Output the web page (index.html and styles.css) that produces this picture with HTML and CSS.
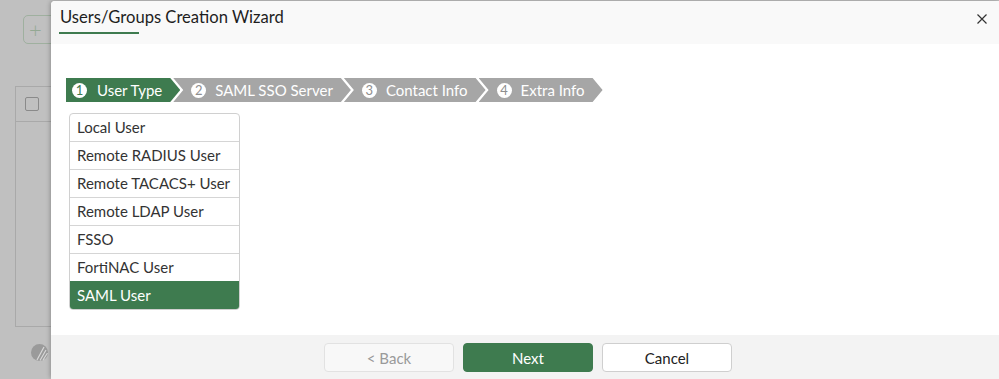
FILE: index.html
```html
<!DOCTYPE html>
<html lang="en">
<head>
    <meta charset="UTF-8">
    <title>Users/Groups Creation Wizard</title>
    <link rel="stylesheet" href="styles.css">
</head>
<body>
<!-- page behind the modal -->
<div class="page">
    <div class="toolbar">
        <button class="add-btn">+</button>
    </div>
    <div class="grid">
        <div class="grid-head"><span class="checkbox"></span></div>
    </div>
    <div class="page-logo">
        <svg width="17" height="17" viewBox="0 0 17 17">
            <circle cx="8.5" cy="8.5" r="8.5" fill="#9a9a9a"/>
            <path d="M6 16 L13 3 M9 16.5 L15 6 M12 16 L16.5 9" stroke="#d8d8d8" stroke-width="1.2"/>
        </svg>
    </div>
</div>

<div class="dialog">
    <div class="dialog-header">
        <h2 class="dialog-title">Users/Groups Creation Wizard</h2>
        <button class="close-btn">
            <svg width="10" height="10" viewBox="0 0 10 10">
                <path d="M0.5 0.5 L9.5 9.5 M9.5 0.5 L0.5 9.5" stroke="#333" stroke-width="1.2"/>
            </svg>
        </button>
    </div>

    <div class="dialog-body">
        <!-- Wizard steps -->
        <ol class="steps">
            <li class="step active"><span class="num">1</span>User Type</li>
            <li class="step"><span class="num">2</span>SAML SSO Server</li>
            <li class="step"><span class="num">3</span>Contact Info</li>
            <li class="step"><span class="num">4</span>Extra Info</li>
        </ol>

        <!-- User type selection -->
        <ul class="type-list">
            <li>Local User</li>
            <li>Remote RADIUS User</li>
            <li>Remote TACACS+ User</li>
            <li>Remote LDAP User</li>
            <li>FSSO</li>
            <li>FortiNAC User</li>
            <li class="selected">SAML User</li>
        </ul>
    </div>

    <div class="dialog-footer">
        <button class="btn" disabled>&lt; Back</button>
        <button class="btn primary">Next</button>
        <button class="btn">Cancel</button>
    </div>
</div>
</body>
</html>
```

FILE: styles.css
```css
/* General */
body {
    margin: 0;
    height: 379px;
    overflow: hidden;
    background: #c0c0c0;
    font-family: "Lato", "Open Sans", sans-serif;
    color: #333;
}

/* Page behind the modal */
.page {
    padding: 15px 0 0 15px;
}

.toolbar {
    padding-left: 8px;
}

.add-btn {
    width: 40px;
    height: 29px;
    background: transparent;
    border: 1px solid #9fb09f;
    border-radius: 5px;
    color: #93a893;
    font-size: 22px;
    font-weight: 300;
    line-height: 20px;
    padding: 0 0 0 5px;
    text-align: left;
    font-family: "Lato", sans-serif;
}

.grid {
    margin-top: 42px;
    width: 60px;
    height: 239px;
    border: 1px solid #a9a9a9;
}

.grid-head {
    height: 35px;
    border-bottom: 1px solid #a9a9a9;
    padding: 10px 0 0 9px;
    box-sizing: border-box;
}

.checkbox {
    display: block;
    width: 12px;
    height: 12px;
    border: 1px solid #8a8a8a;
    border-radius: 2px;
}

.page-logo {
    margin: 17px 0 0 16px;
}

/* Modal */
.dialog {
    position: absolute;
    left: 51px;
    top: 1px;
    right: 0;
    bottom: 0;
    display: flex;
    flex-direction: column;
    background: #fff;
    border-radius: 4px 0 0 4px;
    box-shadow: -1px 0 4px rgba(0, 0, 0, 0.25);
}

.dialog-header {
    display: flex;
    justify-content: space-between;
    align-items: flex-start;
    height: 43px;
    box-sizing: border-box;
    padding: 5px 12px 0 8px;
    background: #f9f9f9;
    border-radius: 4px 0 0 0;
}

.dialog-title {
    margin: 0;
    font-size: 16.6px;
    font-weight: 400;
    line-height: 22px;
    color: #1e1e1e;
    padding-left: 1px;
}

.dialog-title::after {
    content: "";
    display: block;
    width: 80px;
    height: 2px;
    margin: 4px 0 0 -1px;
    background: #3e7b4f;
}

.close-btn {
    background: none;
    border: none;
    padding: 0;
    margin-top: 8px;
    width: 10px;
    height: 10px;
    line-height: 0;
    cursor: pointer;
}

.dialog-body {
    flex: 1;
    padding: 34px 15px 0 15px;
}

/* Wizard steps */
.steps {
    display: flex;
    list-style: none;
    margin: 0;
    padding: 0;
}

.step {
    display: flex;
    align-items: center;
    gap: 9px;
    height: 24px;
    padding: 0 18px 0 18px;
    margin-left: -7px;
    background: #a6a6a6;
    color: #fff;
    font-size: 15px;
    white-space: nowrap;
    clip-path: polygon(0 0, calc(100% - 10px) 0, 100% 50%, calc(100% - 10px) 100%, 0 100%, 10px 50%);
}

.step.active {
    margin-left: 0;
    padding-left: 6px;
    padding-right: 18px;
    gap: 10px;
    background: #3e7b4f;
    clip-path: polygon(0 0, calc(100% - 10px) 0, 100% 50%, calc(100% - 10px) 100%, 0 100%);
}

.num {
    display: inline-flex;
    align-items: center;
    justify-content: center;
    width: 15px;
    height: 15px;
    border-radius: 50%;
    background: #fff;
    color: #8f8f8f;
    font-size: 13px;
    font-weight: 400;
}

.step.active .num {
    color: #3e7b4f;
}

/* User type list */
.type-list {
    list-style: none;
    margin: 11px 0 0 3px;
    padding: 0;
    width: 169px;
    border: 1px solid #d0d0d0;
    border-radius: 4px;
    overflow: hidden;
}

.type-list li {
    height: 27px;
    line-height: 27px;
    padding-left: 7px;
    font-size: 15px;
    color: #333;
    border-top: 1px solid #d5d5d5;
}

.type-list li:first-child {
    border-top: none;
}

.type-list li.selected {
    background: #3e7b4f;
    color: #fff;
    border-top-color: #3e7b4f;
}

/* Footer */
.dialog-footer {
    display: flex;
    justify-content: center;
    gap: 9px;
    height: 44px;
    box-sizing: border-box;
    padding: 8px 0 0 6px;
    background: #f3f3f3;
}

.btn {
    width: 130px;
    height: 29px;
    border: 1px solid #cfcfcf;
    border-radius: 4px;
    background: #fff;
    color: #222;
    font-family: "Lato", sans-serif;
    font-size: 15px;
    cursor: pointer;
}

.btn:disabled {
    background: #f8f8f8;
    border-color: #e2e2e2;
    color: #9a9a9a;
    cursor: default;
}

.btn.primary {
    background: #3e7b4f;
    border-color: #3e7b4f;
    color: #fff;
}
```
